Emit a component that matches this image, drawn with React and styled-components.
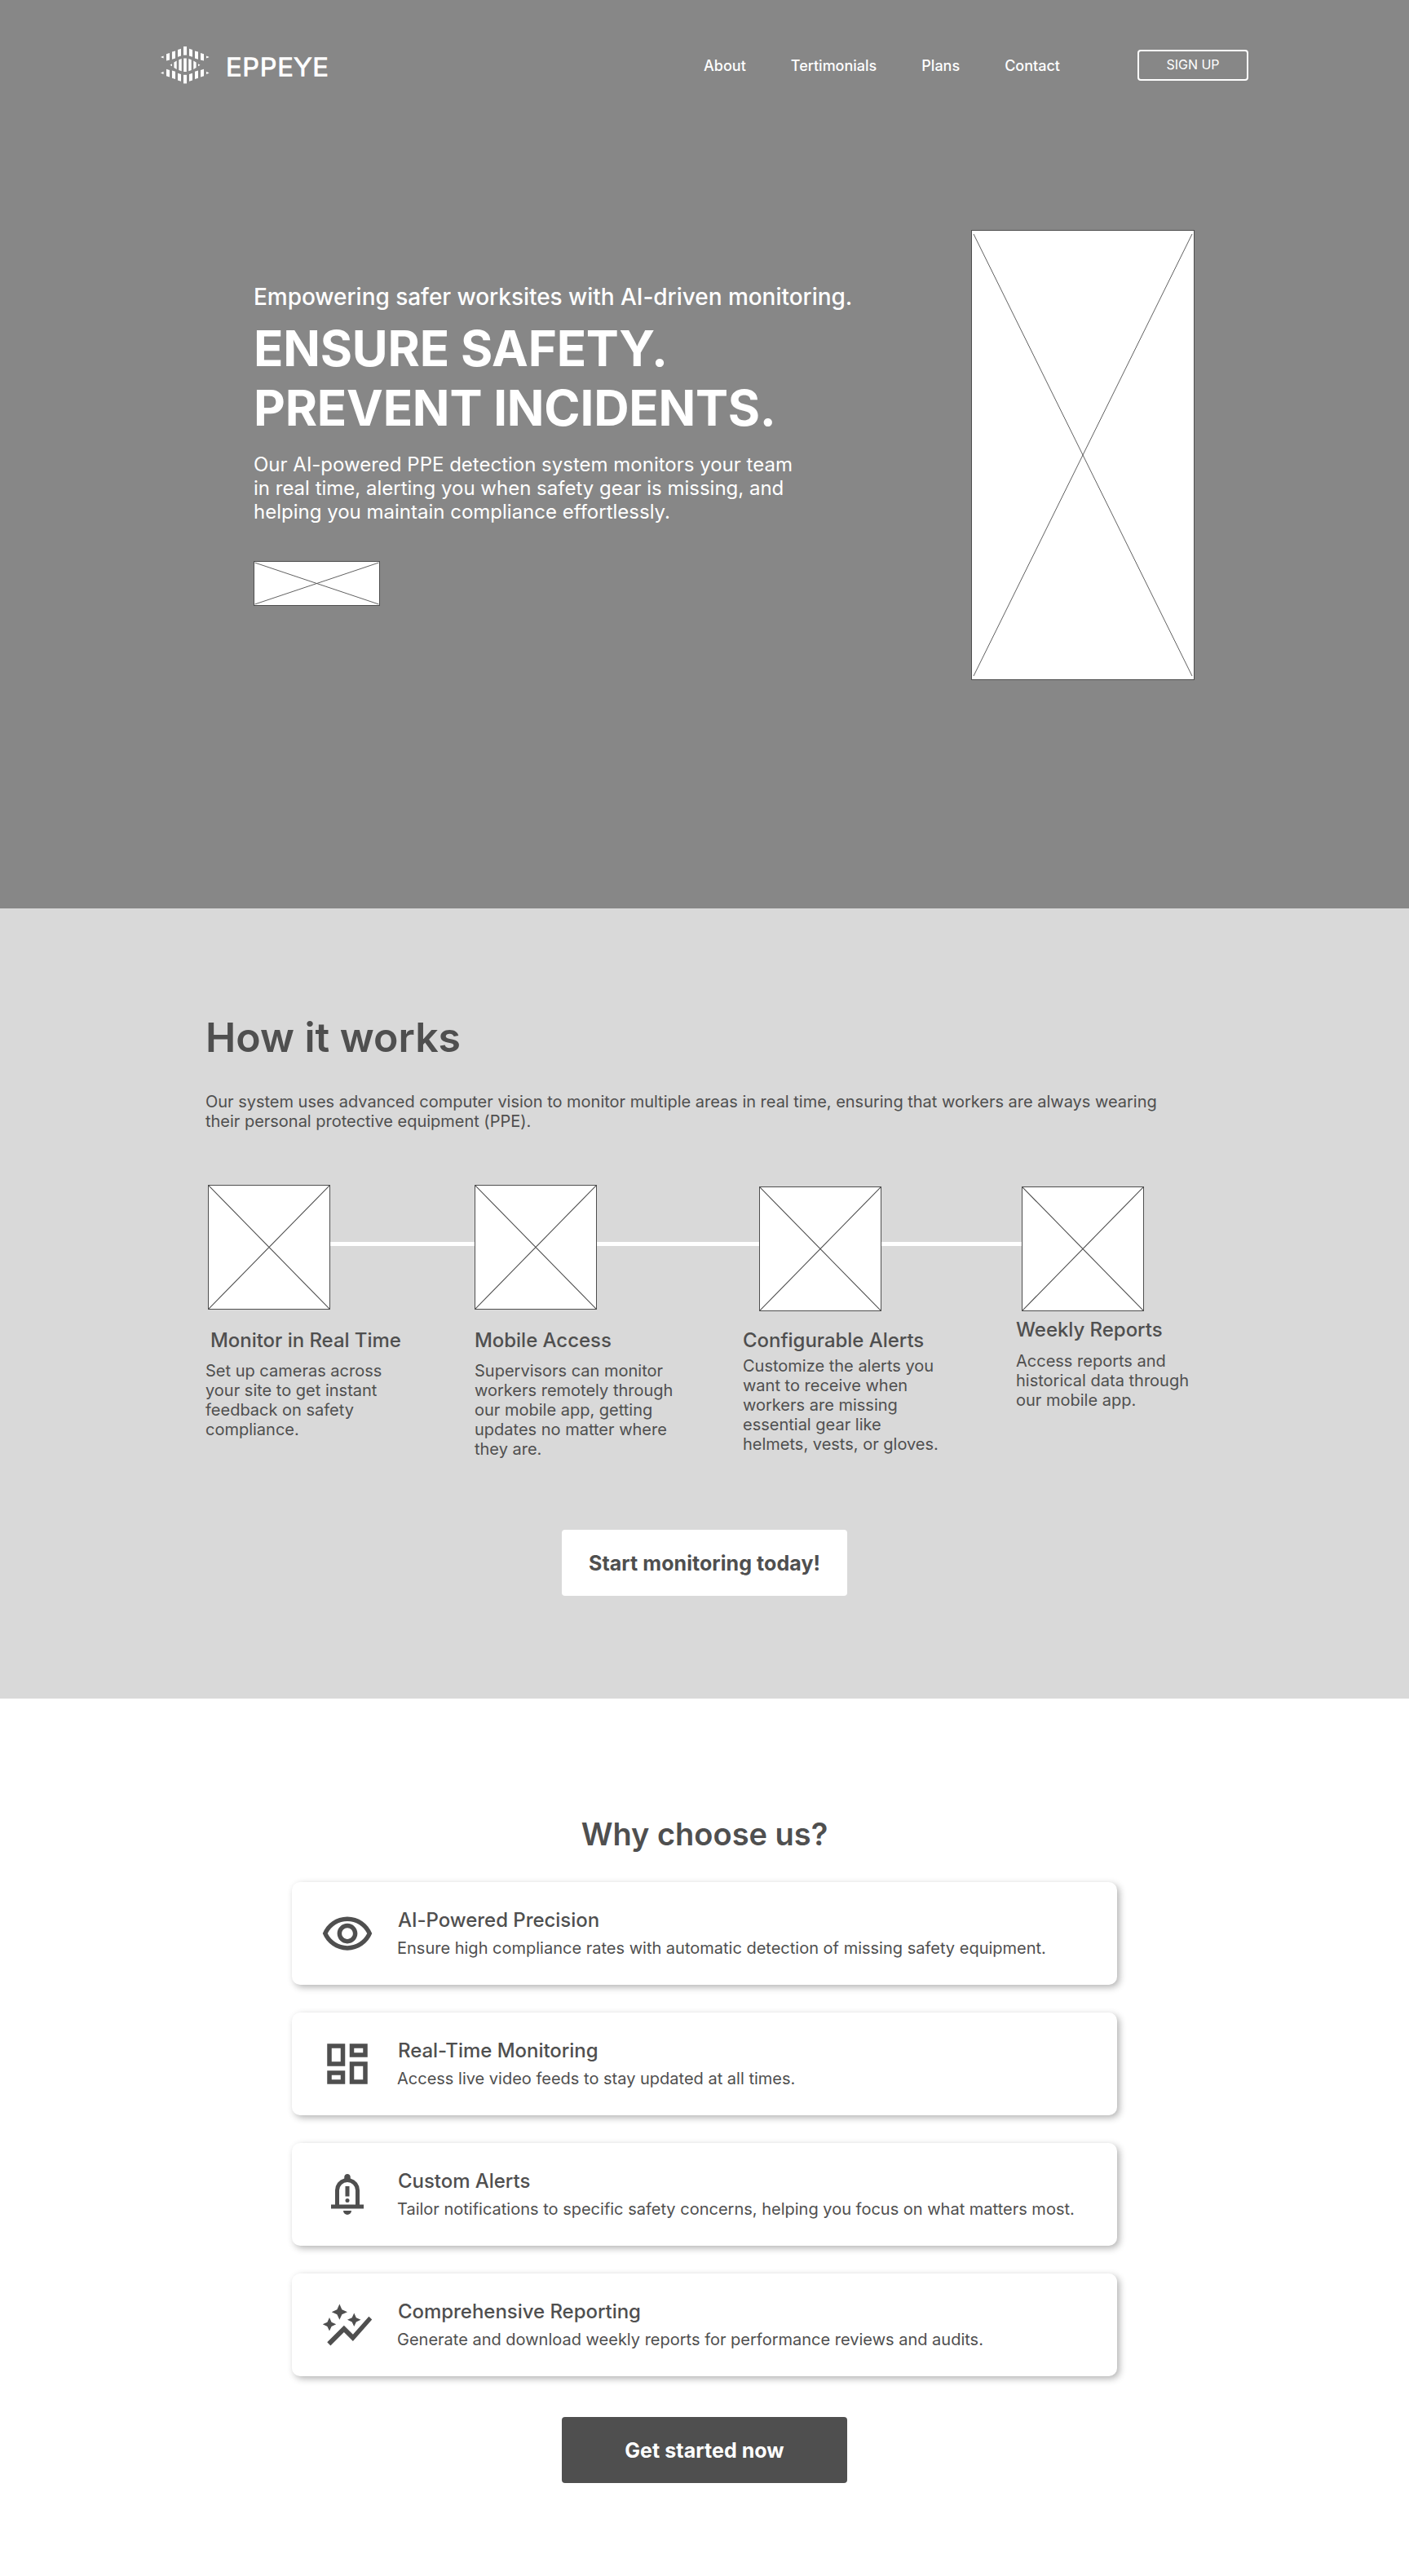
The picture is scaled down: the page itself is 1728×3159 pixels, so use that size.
import React from "react";
import styled, { createGlobalStyle } from "styled-components";

const ink = "#4f4f4f";

const GlobalStyle = createGlobalStyle`
  *, *::before, *::after { box-sizing: border-box; }
  body {
    margin: 0;
    background: #fff;
    color: ${ink};
    font-family: Inter, "Liberation Sans", sans-serif;
  }
  h1, h2, h3, p, ul { margin: 0; padding: 0; }
`;

const Page = styled.div`
  width: 1728px;
  min-height: 3159px;
`;

const Hero = styled.section`
  height: 1114px;
  background: #878787;
  color: #fff;
`;

const Header = styled.header`
  display: flex;
  align-items: center;
  height: 160px;
  padding: 0 197px 0 197px;
`;

const Brand = styled.a`
  display: flex;
  align-items: center;
  gap: 20px;
`;

const Wordmark = styled.span`
  font-size: 30px;
  line-height: 36px;
  letter-spacing: 0.8px;
  font-weight: 300;
  -webkit-text-stroke: 1.4px #fff;
  padding-top: 3px;
  transform: scaleX(1.09);
  transform-origin: left center;
`;

const Nav = styled.nav`
  display: flex;
  gap: 55px;
  margin-left: auto;
`;

const NavLink = styled.a`
  font-size: 18px;
  line-height: 22px;
  font-weight: 500;
  padding-top: 1px;
`;

const SignUp = styled.button`
  width: 136px;
  height: 38px;
  margin-left: 95px;
  padding: 0 0 2px;
  border: 2px solid #fff;
  border-radius: 4px;
  background: none;
  color: #fff;
  font: 400 16px/32px Inter, sans-serif;
`;

const HeroBody = styled.div`
  display: grid;
  grid-template-columns: 880px 274px;
  align-items: start;
  padding: 122px 0 0 311px;
`;

const HeroCopy = styled.div`
  padding-top: 65px;
`;

const Tagline = styled.p`
  font-size: 28px;
  line-height: 34px;
  font-weight: 500;
  letter-spacing: -0.04px;
`;

const HeroTitle = styled.h1`
  margin-top: 10px;
  font-size: 60px;
  line-height: 73px;
  font-weight: 700;
  letter-spacing: -0.22px;
`;

const HeroText = styled.p`
  width: 700px;
  margin: 18px 0 46px;
  font-size: 24px;
  line-height: 29px;
`;

const Frame = styled.svg`
  display: block;
  flex: none;
  width: ${(p) => p.$w}px;
  height: ${(p) => p.$h}px;
  margin-top: ${(p) => p.$drop || 0}px;
  background: #fff;
  border: 1px solid ${ink};
`;

const Works = styled.section`
  display: flex;
  flex-direction: column;
  height: 969px;
  padding: 128px 0 0 252px;
  background: #d9d9d9;
`;

const WorksTitle = styled.h2`
  font-size: 50px;
  line-height: 60px;
  font-weight: 600;
`;

const WorksText = styled.p`
  margin-top: 37px;
  width: 1200px;
  font-size: 20px;
  line-height: 24px;
  letter-spacing: -0.015px;
`;

const Track = styled.div`
  display: flex;
  align-items: flex-start;
  height: 155px;
  margin: 66px 0 8px 3px;
`;

const Connector = styled.span`
  width: ${(p) => p.$w}px;
  height: 5px;
  margin-top: 70px;
  background: #fff;
`;

const Steps = styled.div`
  display: grid;
  grid-template-columns: 330px 329px 335px 240px;
`;

const Step = styled.article`
  padding-top: ${(p) => p.$top}px;
`;

const StepTitle = styled.h3`
  padding-left: ${(p) => p.$indent || 0}px;
  font-size: 24px;
  line-height: 29px;
  font-weight: 500;
  letter-spacing: -0.04px;
`;

const StepText = styled.p`
  margin-top: ${(p) => p.$gap}px;
  font-size: 20px;
  line-height: 24px;
`;

const Cta = styled.button`
  display: block;
  width: 350px;
  height: 81px;
  border: 0;
  border-radius: 4px;
  background: ${(p) => (p.$dark ? ink : "#fff")};
  color: ${(p) => (p.$dark ? "#fff" : ink)};
  font: 700 25px/30px Inter, sans-serif;
  letter-spacing: 0.06px;
`;

const WorksAction = styled.div`
  margin: 87px 0 0 437px;
`;

const Why = styled.section`
  display: flex;
  flex-direction: column;
  align-items: center;
  padding-top: 142px;
`;

const WhyTitle = styled.h2`
  font-size: 38px;
  line-height: 48px;
  font-weight: 600;
`;

const Cards = styled.div`
  display: flex;
  flex-direction: column;
  gap: 34px;
  width: 1012px;
  margin: 35px 0 50px;
`;

const Card = styled.article`
  display: flex;
  align-items: center;
  gap: 28px;
  height: 126px;
  padding-left: 35px;
  border-radius: 10px;
  background: #fff;
  box-shadow: 3px 3px 8px rgba(0, 0, 0, 0.3);
`;

const CardIcon = styled.svg`
  display: block;
  width: 66px;
  height: 66px;
  fill: ${ink};
`;

const CardBody = styled.div`
  padding-bottom: 1px;
`;

const CardTitle = styled.h3`
  padding-left: 1px;
  font-size: 24px;
  line-height: 29px;
  font-weight: 500;
  letter-spacing: -0.04px;
`;

const CardText = styled.p`
  margin-top: 8px;
  font-size: 20px;
  line-height: 24px;
  white-space: nowrap;
`;

function Placeholder({ w, h, drop, inset = 0 }) {
  const right = w - 2 - inset / 2;
  const bottom = h - 2 - inset;
  return (
    <Frame $w={w} $h={h} $drop={drop} viewBox={`0 0 ${w - 2} ${h - 2}`}>
      <path
        d={`M${inset / 2} ${inset}L${right} ${bottom}M${right} ${inset}L${inset / 2} ${bottom}`}
        stroke={ink}
        strokeWidth={inset ? 0.9 : 1.1}
      />
    </Frame>
  );
}

// Each bar: [x, top, height] of the upper arch; the lower arch mirrors it.
const arch = [[7, 8, 9.6], [14, 5.4, 10.4], [21, 2.7, 10], [28, 0, 10.6], [35, 2.7, 10], [42, 5.4, 10.4], [49, 8, 9.6]];

function Logo() {
  return (
    <svg width="60" height="46" viewBox="0 0 60 46" fill="#fff">
      {arch.map(([x, y, h]) => {
        const d = x < 28 ? 1.2 : x > 28 ? -1.2 : 0;
        const up = `M${x} ${y + Math.max(d, 0)}L${x + 4} ${y + Math.max(-d, 0)}V${y + h - Math.max(d, 0)}L${x} ${y + h - Math.max(-d, 0)}Z`;
        return (
          <g key={x}>
            <path d={up} />
            <path d={up} transform="matrix(1 0 0 -1 0 45.4)" />
          </g>
        );
      })}
      <path d="M0 13l3.6-1.6v3.2zM59.6 13L56 11.4v3.2zM0 32.4l3.6-1.6v3.2zM59.6 32.4L56 30.8v3.2z" />
      <path d="M11.5 22.7l2.5-1.5v3zM48.5 22.7l-2.5-1.5v3z" />
      <path d="M16.4 19.5l3.3-2v10.4l-3.3-2zM22.3 16.3l3.4-1.2v15.2l-3.4-1.2zM28.2 14.5h3.6v16.4h-3.6zM34.3 15.1l3.4 1.2v12.8l-3.4 1.2zM40.3 17.5l3.3 2v6.4l-3.3 2z" />
    </svg>
  );
}

const icons = {
  eye: "M12 6c3.79 0 7.17 2.13 8.82 5.5C19.17 14.87 15.79 17 12 17s-7.17-2.13-8.82-5.5C4.83 8.13 8.21 6 12 6m0-2C7 4 2.73 7.11 1 11.5 2.73 15.89 7 19 12 19s9.27-3.11 11-7.5C21.27 7.11 17 4 12 4zm0 5c1.38 0 2.5 1.12 2.5 2.5S13.38 14 12 14s-2.5-1.12-2.5-2.5S10.62 9 12 9m0-2c-2.48 0-4.5 2.02-4.5 4.5S9.52 16 12 16s4.5-2.02 4.5-4.5S14.48 7 12 7z",
  grid: "M19 5v2h-4V5h4M9 5v6H5V5h4m10 8v6h-4v-6h4M9 17v2H5v-2h4M21 3h-8v6h8V3zM11 3H3v10h8V3zm10 8h-8v10h8V11zm-10 4H3v6h8v-6z",
  bell: "M4 19v-2h2v-7q0-2.075 1.25-3.688T10.5 4.2v-.7q0-.625.438-1.062T12 2t1.063.438T13.5 3.5v.7q2 .5 3.25 2.113T18 10v7h2v2zm8 3q-.825 0-1.412-.588T10 20h4q0 .825-.588 1.413T12 22zm-4-5h8v-7q0-1.65-1.175-2.825T12 6 9.175 7.175 8 10zM11 8h2v5h-2zM12 14a1 1 0 1 1 0 2 1 1 0 0 1 0-2z",
  graph: "M14.06 9.94L12 9l2.06-.94L15 6l.94 2.06L18 9l-2.06.94L15 12l-.94-2.06zM4 14l.94-2.06L7 11l-2.06-.94L4 8l-.94 2.06L1 11l2.06.94L4 14zm4.5-5l1.09-2.41L12 5.5 9.59 4.41 8.5 2 7.41 4.41 5 5.5l2.41 1.09L8.5 9zm-4 11.5l6-6.01 4 4L23 8.93l-1.41-1.41-7.09 7.97-4-4L3 19l1.5 1.5z",
};

const features = [
  { icon: "eye", box: "0 -0.5 24 24", title: "AI-Powered Precision", text: "Ensure high compliance rates with automatic detection of missing safety equipment." },
  { icon: "grid", box: "0 0 24 24", title: "Real-Time Monitoring", text: "Access live video feeds to stay updated at all times." },
  { icon: "bell", box: "-1.2 -1.2 26.4 26.4", title: "Custom Alerts", text: "Tailor notifications to specific safety concerns, helping you focus on what matters most." },
  { icon: "graph", box: "0 -0.75 24 24", title: "Comprehensive Reporting", text: "Generate and download weekly reports for performance reviews and audits." },
];

const steps = [
  { top: 13, gap: 11, indent: 6, title: "Monitor in Real Time", lines: ["Set up cameras across", "your site to get instant", "feedback on safety", "compliance."] },
  { top: 13, gap: 11, title: "Mobile Access", lines: ["Supervisors can monitor", "workers remotely through", "our mobile app, getting", "updates no matter where", "they are."] },
  { top: 13, gap: 5, title: "Configurable Alerts", lines: ["Customize the alerts you", "want to receive when", "workers are missing", "essential gear like", "helmets, vests, or gloves."] },
  { top: 0, gap: 12, title: "Weekly Reports", lines: ["Access reports and", "historical data through", "our mobile app."] },
];

const broken = (lines) =>
  lines.map((line, i) => (
    <React.Fragment key={line}>
      {i > 0 && <br />}
      {line}
    </React.Fragment>
  ));

export default function App() {
  return (
    <Page>
      <GlobalStyle />
      <Hero>
        <Header>
          <Brand>
            <Logo />
            <Wordmark>EPPEYE</Wordmark>
          </Brand>
          <Nav>
            <NavLink>About</NavLink>
            <NavLink>Tertimonials</NavLink>
            <NavLink>Plans</NavLink>
            <NavLink>Contact</NavLink>
          </Nav>
          <SignUp>SIGN UP</SignUp>
        </Header>
        <HeroBody>
          <HeroCopy>
            <Tagline>Empowering safer worksites with AI-driven monitoring.</Tagline>
            <HeroTitle>{broken(["ENSURE SAFETY.", "PREVENT INCIDENTS."])}</HeroTitle>
            <HeroText>
              {broken([
                "Our AI-powered PPE detection system monitors your team",
                "in real time, alerting you when safety gear is missing, and",
                "helping you maintain compliance effortlessly.",
              ])}
            </HeroText>
            <Placeholder w={155} h={55} inset={1} />
          </HeroCopy>
          <Placeholder w={274} h={552} inset={4} />
        </HeroBody>
      </Hero>

      <Works>
        <WorksTitle>How it works</WorksTitle>
        <WorksText>
          {broken([
            "Our system uses advanced computer vision to monitor multiple areas in real time, ensuring that workers are always wearing",
            "their personal protective equipment (PPE).",
          ])}
        </WorksText>
        <Track>
          <Placeholder w={150} h={153} />
          <Connector $w={177} />
          <Placeholder w={150} h={153} />
          <Connector $w={199} />
          <Placeholder w={150} h={153} drop={2} />
          <Connector $w={172} />
          <Placeholder w={150} h={153} drop={2} />
        </Track>
        <Steps>
          {steps.map((s) => (
            <Step key={s.title} $top={s.top}>
              <StepTitle $indent={s.indent}>{s.title}</StepTitle>
              <StepText $gap={s.gap}>{broken(s.lines)}</StepText>
            </Step>
          ))}
        </Steps>
        <WorksAction>
          <Cta>Start monitoring today!</Cta>
        </WorksAction>
      </Works>

      <Why>
        <WhyTitle>Why choose us?</WhyTitle>
        <Cards>
          {features.map((f) => (
            <Card key={f.title}>
              <CardIcon viewBox={f.box}>
                <path fillRule="evenodd" d={icons[f.icon]} />
              </CardIcon>
              <CardBody>
                <CardTitle>{f.title}</CardTitle>
                <CardText>{f.text}</CardText>
              </CardBody>
            </Card>
          ))}
        </Cards>
        <Cta $dark>Get started now</Cta>
      </Why>
    </Page>
  );
}
